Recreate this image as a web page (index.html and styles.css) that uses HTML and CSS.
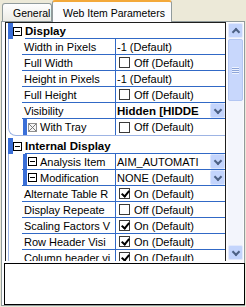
FILE: index.html
```html
<!DOCTYPE html>
<html lang="en">
<head>
  <meta charset="UTF-8" />
  <title>Web Item Parameters</title>
  <link rel="stylesheet" href="styles.css">
</head>
<body>
  <div class="tabs">
    <div class="tab">General</div>
    <div class="tab active">Web Item Parameters</div>
  </div>

  <div class="panel">
    <div class="top">
      <div class="grid">
        <!-- Display -->
        <div class="cat first">
          <span class="strip"></span>
          <span class="box minus"></span>
          <span class="cat-title">Display</span>
        </div>
        <div class="group">
          <div class="row"><span class="lead"></span><span class="name">Width in Pixels</span><span class="val">-1 (Default)</span></div>
          <div class="row"><span class="lead"></span><span class="name">Full Width</span><span class="val"><span class="chk"></span>Off (Default)</span></div>
          <div class="row"><span class="lead"></span><span class="name">Height in Pixels</span><span class="val">-1 (Default)</span></div>
          <div class="row"><span class="lead"></span><span class="name">Full Height</span><span class="val"><span class="chk"></span>Off (Default)</span></div>
          <div class="row"><span class="lead"></span><span class="name">Visibility</span><span class="val bold">Hidden [HIDDE<span class="drop"></span></span></div>
          <div class="row sub last"><span class="lead"></span><span class="name"><span class="sstrip"></span><span class="xbox"></span>With Tray</span><span class="val"><span class="chk"></span>Off (Default)</span></div>
        </div>

        <!-- Internal Display -->
        <div class="cat">
          <span class="strip"></span>
          <span class="box minus"></span>
          <span class="cat-title">Internal Display</span>
        </div>
        <div class="group">
          <div class="row sub"><span class="lead"></span><span class="name"><span class="sstrip"></span><span class="box minus"></span>Analysis Item</span><span class="val">AIM_AUTOMATI<span class="drop"></span></span></div>
          <div class="row sub"><span class="lead"></span><span class="name"><span class="sstrip"></span><span class="box minus"></span>Modification</span><span class="val">NONE (Default)<span class="drop"></span></span></div>
          <div class="row"><span class="lead"></span><span class="name">Alternate Table R</span><span class="val"><span class="chk on"></span>On (Default)</span></div>
          <div class="row"><span class="lead"></span><span class="name">Display Repeate</span><span class="val"><span class="chk"></span>Off (Default)</span></div>
          <div class="row"><span class="lead"></span><span class="name">Scaling Factors V</span><span class="val"><span class="chk on"></span>On (Default)</span></div>
          <div class="row"><span class="lead"></span><span class="name">Row Header Visi</span><span class="val"><span class="chk on"></span>On (Default)</span></div>
          <div class="row"><span class="lead"></span><span class="name">Column header vi</span><span class="val"><span class="chk on"></span>On (Default)</span></div>
        </div>
      </div>

      <div class="scrollbar">
        <div class="sbtn up"></div>
        <div class="track">
          <div class="thumb"><span class="grip"></span></div>
        </div>
        <div class="sbtn down"></div>
      </div>
    </div>

    <div class="desc"></div>
  </div>
</body>
</html>
```

FILE: styles.css
```css
:root {
  --bg: #ece9d8;
  --tab-border: #919b9c;
  --line: #3169c6;
  --strip: #3a6fd8;
  --group-line: #9db4e4;
  --scroll: #c3d4fc;
  --scroll-border: #b3c6f2;
  --arrow: #4d6185;
}

* {
  box-sizing: border-box;
  margin: 0;
  padding: 0;
}

body {
  background-color: var(--bg);
  font-family: "Liberation Sans", Arial, sans-serif;
  font-size: 11px;
  color: #000;
  width: 246px;
  height: 307px;
  overflow: hidden;
}

/* Tabs */
.tabs {
  display: flex;
  align-items: flex-end;
  height: 21px;
  padding-left: 2px;
}

.tab {
  height: 18px;
  padding: 3px 0 0 10px;
  width: 50px;
  font-size: 10.5px;
  border: 1px solid var(--tab-border);
  border-bottom: none;
  border-radius: 3px 3px 0 0;
  background: linear-gradient(#fefefe, #ecebe5);
}

.tab.active {
  width: 120px;
  height: 22px;
  padding: 5px 0 0 10px;
  margin-bottom: -1px;
  background: #fcfcfe;
  border-top: 2px solid #f3a83a;
  position: relative;
}

/* Panel */
.panel {
  margin-left: 1px;
  width: 244px;
  height: 285px;
  border: 1px solid var(--tab-border);
  background: #fcfcfe;
  padding: 0 0 0 1px;
}

.top {
  display: flex;
  height: 239px;
}

.grid {
  margin-left: 2px;
  width: 221px;
  border: 1px solid #1e1e1e;
  border-bottom: none;
  background: #fff;
  overflow: hidden;
}

/* Categories */
.cat {
  display: flex;
  align-items: center;
  height: 16px;
  margin-left: 2px;
}

.cat .strip {
  width: 5px;
  height: 100%;
  background: var(--strip);
}

.cat-title {
  font-weight: bold;
  font-size: 11.5px;
  margin-left: 3px;
  flex: 1;
  height: 100%;
  line-height: 16px;
  border-bottom: 1px solid var(--line);
}

.box {
  width: 9px;
  height: 9px;
  border: 1px solid #000;
  background: #fff;
  position: relative;
  flex: none;
}

.box.minus::after {
  content: "";
  position: absolute;
  left: 1px;
  top: 3px;
  width: 5px;
  height: 1px;
  background: #000;
}

/* Groups and rows */
.group {
  margin-left: 2px;
  border-left: 1px solid var(--group-line);
  border-bottom: 1px solid var(--group-line);
  border-bottom-left-radius: 8px;
  margin-bottom: 2px;
}

.row {
  display: flex;
  height: 16px;
}

.lead {
  width: 13px;
  flex: none;
}

.name {
  width: 94px;
  flex: none;
  display: flex;
  align-items: center;
  padding-left: 2px;
  border-bottom: 1px solid var(--line);
  border-right: 1px solid var(--line);
  white-space: nowrap;
  overflow: hidden;
}

.val {
  flex: 1;
  display: flex;
  align-items: center;
  padding-left: 1px;
  border-bottom: 1px solid var(--line);
  white-space: nowrap;
  overflow: hidden;
  position: relative;
}

.row.last .name,
.row.last .val {
  border-bottom: none;
}

.val.bold {
  font-weight: bold;
  font-size: 11.5px;
}

.sstrip {
  width: 4px;
  height: 16px;
  margin-left: -1px;
  margin-right: 1px;
  background: var(--strip);
  flex: none;
}

.row.sub .name .box {
  margin-right: 3px;
}

.xbox {
  width: 9px;
  height: 9px;
  border: 1px solid #8e8e8e;
  margin-right: 3px;
  flex: none;
  background:
    linear-gradient(45deg, transparent 44%, #7a7a7a 44%, #7a7a7a 56%, transparent 56%),
    linear-gradient(-45deg, transparent 44%, #7a7a7a 44%, #7a7a7a 56%, transparent 56%),
    #f4f4f4;
}

.chk {
  width: 11px;
  height: 11px;
  border: 1px solid #3a3a3a;
  background: #fff;
  margin: 0 4px 0 2px;
  flex: none;
  position: relative;
}

.chk.on::after {
  content: "";
  position: absolute;
  left: 3px;
  top: 0px;
  width: 3px;
  height: 6px;
  border: solid #000;
  border-width: 0 2px 2px 0;
  transform: rotate(40deg);
}

.drop {
  position: absolute;
  right: 0;
  top: 0;
  width: 15px;
  height: 15px;
  border-radius: 2px;
  background: var(--scroll);
  border: 1px solid #dbe5fd;
}

.drop::after {
  content: "";
  position: absolute;
  left: 4px;
  top: 3px;
  width: 4px;
  height: 4px;
  border: solid var(--arrow);
  border-width: 0 2px 2px 0;
  transform: rotate(45deg);
}

/* Scrollbar */
.scrollbar {
  margin-left: 2px;
  margin-top: 1px;
  width: 15px;
  height: 237px;
  display: flex;
  flex-direction: column;
  background: #f3f5fc;
}

.sbtn {
  height: 15px;
  flex: none;
  border-radius: 2px;
  background: var(--scroll);
  border: 1px solid #e2e9fd;
  position: relative;
}

.sbtn::after {
  content: "";
  position: absolute;
  left: 4px;
  width: 4px;
  height: 4px;
  border: solid var(--arrow);
  border-width: 2px 0 0 2px;
}

.sbtn.up::after {
  top: 5px;
  transform: rotate(45deg);
}

.sbtn.down::after {
  top: 3px;
  transform: rotate(225deg);
}

.track {
  flex: 1;
  padding-top: 1px;
}

.thumb {
  height: 62px;
  border-radius: 2px;
  background: #c8d7fc;
  border: 1px solid var(--scroll-border);
  display: flex;
  align-items: center;
  justify-content: center;
}

.grip {
  width: 7px;
  height: 7px;
  background: repeating-linear-gradient(#eef3fe 0 1px, #8da5d9 1px 2px);
}

/* Description */
.desc {
  margin: 2px 0 0 1px;
  width: 241px;
  height: 42px;
  border: 1px solid #000;
  background: #fff;
}
```
